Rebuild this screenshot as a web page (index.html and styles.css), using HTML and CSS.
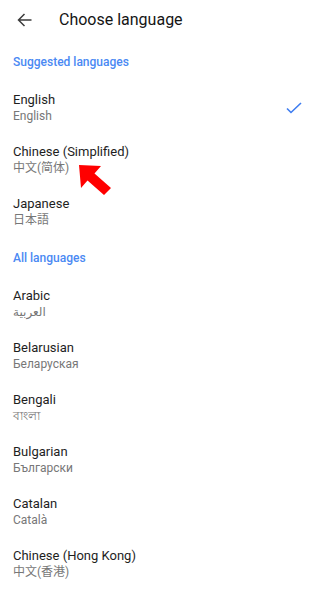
FILE: index.html
```html
<!DOCTYPE html>
<html>
<head>
<meta charset="utf-8">
<link rel="stylesheet" href="styles.css">
</head>
<body>
<div class="app">
  <header class="header">
    <svg class="back" width="24" height="24" viewBox="0 0 24 24">
      <path d="M20.5 12H7.5M13.5 6L7.5 12L13.5 18" fill="none" stroke="#3c3c3c" stroke-width="1.5"/>
    </svg>
    <h1 class="title">Choose language</h1>
  </header>

  <div class="section first">Suggested languages</div>
  <div class="item">
    <div class="texts">
      <div class="name">English</div>
      <div class="sub">English</div>
    </div>
    <svg class="check" width="18" height="14" viewBox="0 0 18 14">
      <path d="M2 7.5L6 11.5L16 2" fill="none" stroke="#3d7cf0" stroke-width="1.6"/>
    </svg>
  </div>
  <div class="item pointed">
    <div class="texts">
      <div class="name">Chinese (Simplified)</div>
      <div class="sub cjk">中文(简体)</div>
    </div>
    <svg class="pointer" width="40" height="40" viewBox="0 0 40 40">
      <polygon points="1,1 23,2 16.5,9.5 33,24 26,31 9.5,16.5 3,24" fill="#ff0000"/>
    </svg>
  </div>
  <div class="item">
    <div class="texts">
      <div class="name">Japanese</div>
      <div class="sub cjk-jp">日本語</div>
    </div>
  </div>

  <div class="section">All languages</div>
  <div class="item">
    <div class="texts">
      <div class="name">Arabic</div>
      <div class="sub">العربية</div>
    </div>
  </div>
  <div class="item">
    <div class="texts">
      <div class="name">Belarusian</div>
      <div class="sub">Беларуская</div>
    </div>
  </div>
  <div class="item">
    <div class="texts">
      <div class="name">Bengali</div>
      <div class="sub">বাংলা</div>
    </div>
  </div>
  <div class="item">
    <div class="texts">
      <div class="name">Bulgarian</div>
      <div class="sub">Български</div>
    </div>
  </div>
  <div class="item">
    <div class="texts">
      <div class="name">Catalan</div>
      <div class="sub">Català</div>
    </div>
  </div>
  <div class="item">
    <div class="texts">
      <div class="name">Chinese (Hong Kong)</div>
      <div class="sub cjk-tc">中文(香港)</div>
    </div>
  </div>
</div>
</body>
</html>
```

FILE: styles.css
```css
* { box-sizing: border-box; }
html, body {
  margin: 0;
  padding: 0;
  background: #ffffff;
}
body {
  font-family: Roboto, "Noto Sans", "DejaVu Sans", "Noto Sans CJK SC", sans-serif;
  color: #202020;
  width: 320px;
  height: 600px;
  overflow: hidden;
}
.app {
  display: flex;
  flex-direction: column;
}
.header {
  height: 40px;
  display: flex;
  align-items: center;
  padding-left: 11px;
}
.back {
  display: block;
  margin-top: -1px;
}
.title {
  margin: -1px 0 0 24px;
  font-size: 16px;
  font-weight: 400;
  color: #151515;
  line-height: 20px;
}
.section {
  height: 40px;
  display: flex;
  align-items: center;
  padding-left: 13px;
  font-size: 12px;
  font-weight: 500;
  color: #4a89f3;
}
.section.first {
  height: 42px;
  padding-top: 1px;
}
.item {
  position: relative;
  height: 52px;
  display: flex;
  align-items: center;
  padding: 0 17px 0 13px;
}
.texts {
  flex: 1;
  display: flex;
  flex-direction: column;
}
.name {
  font-size: 13px;
  line-height: 16px;
  color: #1e1e1e;
}
.sub {
  font-size: 12px;
  line-height: 16px;
  color: #777777;
}
.cjk { font-family: Roboto, "Noto Sans CJK SC", sans-serif; }
.cjk-jp { font-family: Roboto, "Noto Sans CJK JP", sans-serif; }
.cjk-tc { font-family: Roboto, "Noto Sans CJK TC", sans-serif; }
.check {
  display: block;
}
.pointer {
  position: absolute;
  left: 78px;
  top: 30px;
  pointer-events: none;
}
```
